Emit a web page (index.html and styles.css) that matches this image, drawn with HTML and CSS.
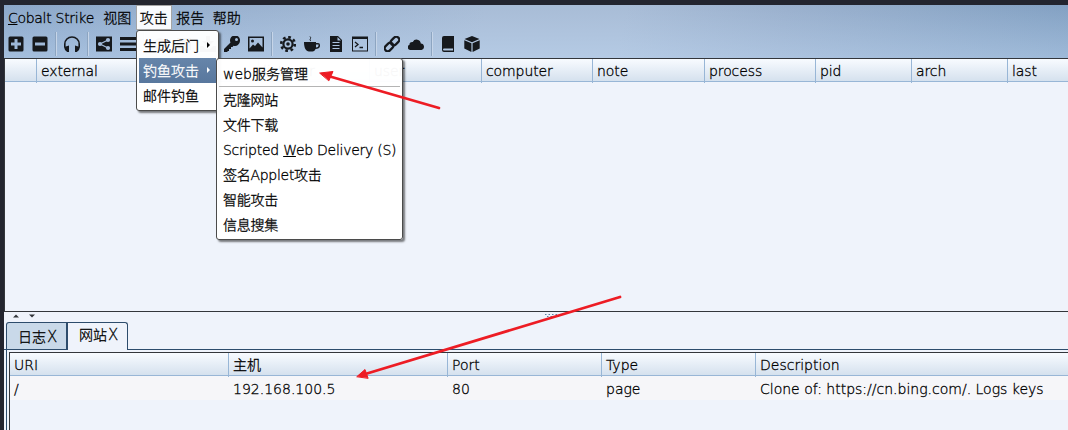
FILE: index.html
```html
<!DOCTYPE html>
<html lang="zh-CN">
<head>
<meta charset="utf-8">
<title>Cobalt Strike</title>
<link rel="stylesheet" href="styles.css">
</head>
<body>
<div class="window">
  <header class="chrome">
    <nav class="menubar">
      <span class="menu menu-app"><u>C</u>obalt Strike</span>
      <span class="menu">视图</span>
      <span class="menu menu-open">攻击</span>
      <span class="menu">报告</span>
      <span class="menu">帮助</span>
    </nav>
    <div class="toolbar">
      <svg viewBox="0 0 16 16"><path fill-rule="evenodd" d="M2 .5H14a1.500 1.500 0 0 1 1.500 1.500V14a1.500 1.500 0 0 1-1.500 1.500H2A1.500 1.500 0 0 1 .5 14V2A1.500 1.500 0 0 1 2 .5ZM6.500 3v3.500H3v3h3.500V13h3V9.500H13v-3H9.500V3Z"/></svg>
      <svg viewBox="0 0 16 16"><path fill-rule="evenodd" d="M2 .5H14a1.500 1.500 0 0 1 1.500 1.500V14a1.500 1.500 0 0 1-1.500 1.500H2A1.500 1.500 0 0 1 .5 14V2A1.500 1.500 0 0 1 2 .5ZM3 6.500v3h10v-3Z"/></svg>
      <i class="sep"></i>
      <svg viewBox="0 0 16 16"><path d="M.8 11V8a7.200 7 0 0 1 14.400 0v3" fill="none" stroke="#16191d" stroke-width="1.600"/><path d="M3.500 10 5 9.500V16H3.200L1 14 0 11ZM12.500 10 11 9.500V16h1.800L15 14l1-3Z"/></svg>
      <i class="sep"></i>
      <svg viewBox="0 0 16 16"><path d="M0 .5h16v15H0Z"/><path d="M4 8l8-4M4 8l8 4" stroke="#a3bbda" stroke-width="1.300"/><g fill="#a3bbda"><circle cx="4" cy="8" r="2.100"/><circle cx="12" cy="4" r="2.100"/><circle cx="12" cy="12" r="2.100"/></g></svg>
      <svg viewBox="0 0 16 16"><path d="M0 1h16v3H0ZM0 6.500h16v3H0ZM0 12h16v3H0Z"/></svg>
      <i class="sep"></i>
      <svg viewBox="0 0 16 16"><circle cx="8" cy="8" r="5" fill="none" stroke="#16191d" stroke-width="2"/></svg>
      <svg viewBox="0 0 16 16"><path d="M1 2h14v12H1Z"/></svg>
      <svg viewBox="0 0 16 16"><path d="M6 0h4v5h4L8 11 2 5h4ZM0 10h3l3 3h4l3-3h3v6H0Z"/></svg>
      <svg viewBox="0 0 16 16"><path fill-rule="evenodd" d="M16 5a5 5 0 0 1-6.500 4.700L8.500 11H7v2H5v2H4L3 16H0v-3l6.500-6.500A5 5 0 1 1 16 5Zm-2-1.500a1.500 1.500 0 1 0-3 0 1.500 1.500 0 0 0 3 0Z"/></svg>
      <svg viewBox="0 0 16 16"><path fill-rule="evenodd" d="M0 .5h16v15H0ZM1.500 2v10.500L5 8.500l2 1.500 3-3.500 4.500 5V2Z"/><circle cx="4.500" cy="5" r="1.500"/></svg>
      <i class="sep"></i>
      <svg viewBox="0 0 16 16"><circle cx="8" cy="8" r="6.800" fill="none" stroke="#16191d" stroke-width="2.600" stroke-dasharray="2.670 2.670"/><circle cx="8" cy="8" r="4.600" fill="none" stroke="#16191d" stroke-width="2.200"/><circle cx="8" cy="8" r="1.800"/></svg>
      <svg viewBox="0 0 16 16"><path fill-rule="evenodd" d="M0 6h12v1h2a2 2 0 0 1 2 2v1c0 2-2 3-4.500 3-.5 1.500-1.500 2.500-3 2.500H5C2 15.500 0 12 0 6Zm12 2.500v3c1.500-.2 2.500-.7 2.500-2V8.500Z"/><path d="M7 5C4.500 3.500 8 2.500 6 .5" fill="none" stroke="#16191d"/></svg>
      <svg viewBox="0 0 16 16"><path fill-rule="evenodd" d="M2 0h8l4 4v12H2ZM4.500 6v1h7V6Zm0 3v1h7V9Zm0 3v1h7v-1ZM9.500 1v3.500H13Z"/></svg>
      <svg viewBox="0 0 16 16"><path fill-rule="evenodd" d="M0 .5h16v15H0ZM1 3v11.500h14V3Z"/><path d="m3 6 3 2.500L3 11M7.500 11.500H11" fill="none" stroke="#16191d" stroke-width="1.300"/></svg>
      <i class="sep"></i>
      <svg viewBox="0 0 16 16"><g fill="none" stroke="#16191d" stroke-width="2.200" transform="rotate(-45 8 8)"><rect x="-1" y="5" width="9.500" height="6" rx="3"/><rect x="7.500" y="5" width="9.500" height="6" rx="3"/></g></svg>
      <svg viewBox="0 0 16 16"><path d="M2.200 14A2.700 2.700 0 0 1 1.500 8.800 2.600 2.600 0 0 1 4.800 6a4.200 4.200 0 0 1 8 1.500A3.300 3.300 0 0 1 13.500 14Z"/></svg>
      <i class="sep"></i>
      <svg viewBox="0 0 16 16"><path fill-rule="evenodd" d="M4 0h10v16H4a2 2 0 0 1-2-2V2a2 2 0 0 1 2-2Zm0 12.500a1 1 0 0 0 0 2h9v-2Z"/></svg>
      <svg viewBox="0 0 16 16"><path d="M8 0l7.500 3L8 6.200.5 3ZM.3 4.200 7.400 7.300V16L.3 12.500ZM15.700 4.200 8.600 7.300V16l7.100-3.500Z"/></svg>
    </div>
  </header>
  <section class="targets">
    <div class="row head sessions">
      <span></span><span>external</span><span>internal</span><span>listener</span><span>user</span><span>computer</span><span>note</span><span>process</span><span>pid</span><span>arch</span><span>last</span>
    </div>
  </section>
  <div class="splitter">
    <svg class="collapse" viewBox="0 0 24 4"><path d="M0 3.500 3 .5l3 3ZM16 .5h6l-3 3Z"/></svg>
    <svg class="grip" viewBox="0 0 14 4"><path d="M0 .5h14M2 2.500h12" stroke="#5a7d9f" stroke-dasharray="1.500 2"/></svg>
  </div>
  <div class="tabs">
    <span class="tab">日志<b>X</b></span>
    <span class="tab tab-active">网站<b>X</b></span>
  </div>
  <section class="panel">
    <div class="sites">
      <div class="row head site-row"><span>URI</span><span>主机</span><span>Port</span><span>Type</span><span>Description</span></div>
      <div class="row site-row site-data"><span>/</span><span>192.168.100.5</span><span>80</span><span>page</span><span>Clone of: https://cn.bing.com/. Logs keys</span></div>
    </div>
  </section>
</div>

<div class="popup popup-attack">
  <div class="item">生成后门<i class="caret"></i></div>
  <div class="item item-active">钓鱼攻击<i class="caret"></i></div>
  <div class="item">邮件钓鱼</div>
</div>
<div class="popup popup-phish">
  <div class="item item-first">web服务管理</div>
  <hr>
  <div class="item">克隆网站</div>
  <div class="item">文件下载</div>
  <div class="item">Scripted <u>W</u>eb Delivery (S)</div>
  <div class="item">签名Applet攻击</div>
  <div class="item">智能攻击</div>
  <div class="item">信息搜集</div>
</div>
<svg class="arrows" viewBox="0 0 1068 430">
  <path d="M439 108 330 76.500M620 297 367 373.500"/>
  <path class="tip" d="M320 73 333 71.500 329 80.500ZM357 376.500 365 369.500 368 378Z"/>
</svg>
</body>
</html>
```
FILE: styles.css
```css
* { box-sizing: border-box; }
body {
  margin: 0;
  width: 1068px;
  height: 430px;
  overflow: hidden;
  position: relative;
  background: #23252f;
  color: #000;
  font: 200 14px/18px "DejaVu Sans", "Noto Sans CJK SC", sans-serif;
  -webkit-text-stroke: .3px currentColor;
  white-space: nowrap;
}
.window {
  height: 430px;
  margin-left: 4px;
  padding-top: 5px;
  display: flex;
  flex-direction: column;
}
.chrome {
  height: 53px;
  background:
    linear-gradient(rgba(255,255,255,0), rgba(200,224,250,.4)),
    linear-gradient(100deg, #8ba7c9 0%, #a8bcd6 45%, #a8bcd6 58%, #9ab0cd 73%, #82a0c2 100%);
}
.menubar { display: flex; height: 25px; }
.menu { padding: 4px 4.250px 0; }
.menu-app { width: 95px; padding-left: 4px; letter-spacing: -.3px; }
.menu-open { background: #f9fbfe; border: 1px solid #a5a5a5; padding: 3px 3.250px 0; }
.toolbar { display: flex; align-items: center; gap: 8px; height: 28px; padding: 0 4px; }
.toolbar svg { width: 16px; height: 16px; fill: #16191d; flex: none; }
.sep { width: 1px; height: 24px; margin: 0 -1px 0 0; background: #c6d5e8; box-shadow: -1px 0 #8da5c1; }
.targets { height: 254px; border: solid #33363b; border-width: 1px 0 1px 1px; background: #eff3fb; }
.row { display: grid; }
.row span { padding-left: 4px; }
.head { height: 23px; line-height: 24px; background: linear-gradient(#f8fbff, #d5e1ee); border-bottom: 1px solid #98b6d6; }
.head span + span { border-left: 1px solid #98b6d6; }
.sessions { grid-template-columns: 31px 111px 111px 111px 112px 111px 112px 111px 96px 96px 1fr; letter-spacing: -.1px; }
.splitter { height: 10px; background: #eff3fb; position: relative; }
.collapse { position: absolute; left: 9px; top: 2px; width: 24px; height: 4px; fill: #33363b; }
.grip { position: absolute; left: 541px; top: 2px; width: 14px; height: 4px; }
.tabs { display: flex; height: 28px; padding-left: 2px; background: linear-gradient(#eff3fb 27px, #2d4c6c 27px); }
.tab { width: 62px; height: 28px; padding: 5px 0 0 11px; background: #c9d9e9; border: 1px solid #2d4c6c; border-right-width: 2px; border-radius: 3px 0 0 0; }
.tab b { font-weight: 200; font-size: 15px; margin-left: 1px; }
.tab-active { width: 60px; padding: 3px 0 0 11px; background: #eff3fb; border-width: 1px 1px 0 0; border-radius: 0 3px 0 0; }
.panel { flex: 1; background: #eff3fb; padding: 2px 0 0 1px; margin-left: 2px; border-left: 1px solid #2d4c6c; }
.window { background: linear-gradient(#23252f 5px, #eff3fb 5px); }
.sites { height: 100%; border: solid #33363b; border-width: 1px 0 0 1px; margin-left: 1px; }
.site-row { grid-template-columns: 218px 219px 154px 154px 1fr; }
.site-data { height: 24px; line-height: 26px; background: #f6f6f9; }
.site-data span + span { padding-left: 5px; }
.popup { position: absolute; border: 1px solid #4b4b4b; border-radius: 3px; background: rgba(255,255,255,.97); box-shadow: 2px 2px 2px rgba(0,0,0,.5); padding: 2px; }
.popup-attack { left: 136px; top: 30px; width: 83px; height: 81px; }
.popup-phish { left: 216px; top: 58px; width: 187px; height: 182px; letter-spacing: -.28px; }
.popup-phish .item { word-spacing: .1px; }
.item { height: 25px; line-height: 26px; padding-left: 4px; display: block; position: relative; }
.popup-phish .item { line-height: 25px; }
.popup-phish .item-first { line-height: 27px; letter-spacing: 0; }
.item-active { background: linear-gradient(#6685aa, #58779d); color: #fff; }
.caret { position: absolute; left: 68px; top: 9px; border: solid transparent; border-width: 3px 0 3px 3px; border-left-color: currentColor; }
hr { margin: 0 0 1px; border: 0; height: 1px; background: #b4b4b4; }
.arrows { position: absolute; left: 0; top: 0; width: 1068px; height: 430px; fill: none; stroke: #ed1c24; stroke-width: 2.700; stroke-linecap: round; }
.tip { fill: #ed1c24; stroke-width: 1; }
```
